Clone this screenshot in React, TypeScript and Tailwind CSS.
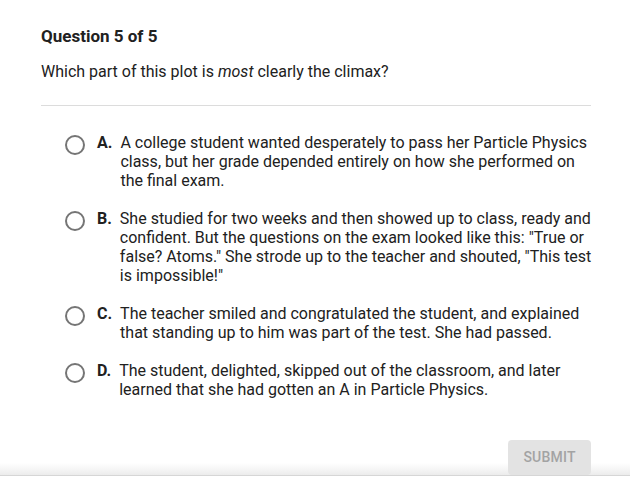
const options = [
  {
    letter: "A.",
    text: "A college student wanted desperately to pass her Particle Physics class, but her grade depended entirely on how she performed on the final exam.",
  },
  {
    letter: "B.",
    text: 'She studied for two weeks and then showed up to class, ready and confident. But the questions on the exam looked like this: "True or false? Atoms." She strode up to the teacher and shouted, "This test is impossible!"',
  },
  {
    letter: "C.",
    text: "The teacher smiled and congratulated the student, and explained that standing up to him was part of the test. She had passed.",
  },
  {
    letter: "D.",
    text: "The student, delighted, skipped out of the classroom, and later learned that she had gotten an A in Particle Physics.",
  },
];

export default function App() {
  return (
    <div
      className="w-[630px] h-[479px] bg-white flex flex-col overflow-hidden text-[#212121]"
      style={{ fontFamily: "Roboto, 'Liberation Sans', sans-serif" }}
    >
      <div className="px-[41px] pt-[26px]">
        <h1 className="text-[17px] leading-[20px] font-bold">Question 5 of 5</h1>
        <p className="mt-[16px] text-[16px] leading-[20px]">
          Which part of this plot is <i>most</i> clearly the climax?
        </p>
        <div className="mt-[23px] h-px w-[550px] bg-[#dcdcdc]" />

        <div className="mt-[27px] flex flex-col gap-[19px] pl-[24px]">
          {options.map((o) => (
            <div key={o.letter} className="flex items-start">
              <div className="mt-[2px] w-[20px] h-[20px] shrink-0 rounded-full border-2 border-[#757575]" />
              <div className="ml-[12px] flex shrink-0 text-[16px] leading-[19px] w-[498px]">
                <span className="font-bold pr-[8px] shrink-0">{o.letter}</span>
                <span>{o.text}</span>
              </div>
            </div>
          ))}
        </div>
      </div>

      <div className="flex-1" />
      <div className="relative flex justify-end px-[39px]">
        <div className="absolute left-0 right-0 bottom-0 h-[12px] bg-gradient-to-b from-transparent to-[#ececec]" />
        <button className="relative z-10 w-[83px] h-[35px] rounded-[4px] bg-[#e3e3e3] text-[#a3a3a3] text-[14px] font-medium tracking-[0.2px]">
          SUBMIT
        </button>
      </div>
      <div className="h-px bg-[#d6d6d6]" />
      <div className="h-[3px] bg-white" />
    </div>
  );
}
